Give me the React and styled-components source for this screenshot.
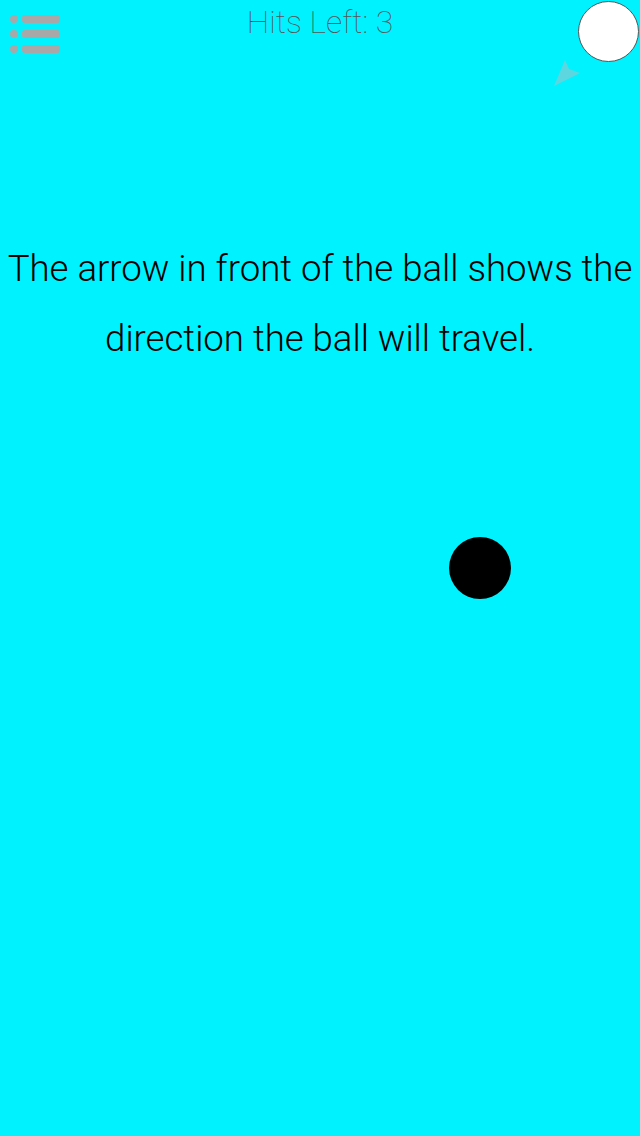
import styled, { createGlobalStyle } from "styled-components"

const Global = createGlobalStyle`
  html, body {
    margin: 0;
    padding: 0;
    background: #00f2ff;
  }
  body {
    font-family: Roboto, "Liberation Sans", sans-serif;
  }
`

const Screen = styled.div`
  position: relative;
  width: 640px;
  height: 1136px;
  background: #00f2ff;
  overflow: hidden;
`

const TopBar = styled.div`
  display: grid;
  grid-template-columns: 1fr auto 1fr;
  align-items: start;
  height: 64px;
`

const Menu = styled.div`
  display: flex;
  flex-direction: column;
  gap: 7px;
  padding: 15px 0 0 10px;
`

const MenuRow = styled.div`
  display: flex;
  align-items: center;
  gap: 4px;
`

const Dot = styled.span`
  width: 8px;
  height: 8px;
  border-radius: 50%;
  background: #a8a8a8;
`

const Bar = styled.span`
  width: 38px;
  height: 8px;
  border-radius: 3px;
  background: #a8a8a8;
`

const Hits = styled.div`
  font-weight: 100;
  font-size: 32px;
  line-height: 44px;
  color: #555;
`

const Target = styled.div`
  justify-self: end;
  width: 59px;
  height: 59px;
  margin: 1px 1px 0 0;
  border-radius: 50%;
  background: #fff;
  border: 1.5px solid #555;
`

const Hint = styled.p`
  margin: 170px 0 0;
  text-align: center;
  font-weight: 300;
  font-size: 36.6px;
  line-height: 70px;
  color: #000;
  white-space: nowrap;
`

const Ball = styled.div`
  position: absolute;
  left: 449px;
  top: 537px;
  width: 62px;
  height: 62px;
  border-radius: 50%;
  background: #000;
`

const Pointer = styled.svg`
  position: absolute;
  left: 550px;
  top: 56px;
`

export default function App() {
  return (
    <Screen>
      <Global />
      <TopBar>
        <Menu>
          {[0, 1, 2].map((i) => (
            <MenuRow key={i}>
              <Dot />
              <Bar />
            </MenuRow>
          ))}
        </Menu>
        <Hits>Hits Left: 3</Hits>
        <Target />
      </TopBar>
      <Hint>
        The arrow in front of the ball shows the
        <br />
        direction the ball will travel.
      </Hint>
      <Pointer width="36" height="36" viewBox="0 0 36 36">
        <polygon points="4,30 15,4 19,13 30,17" fill="#5dd6df" />
      </Pointer>
      <Ball />
    </Screen>
  )
}
